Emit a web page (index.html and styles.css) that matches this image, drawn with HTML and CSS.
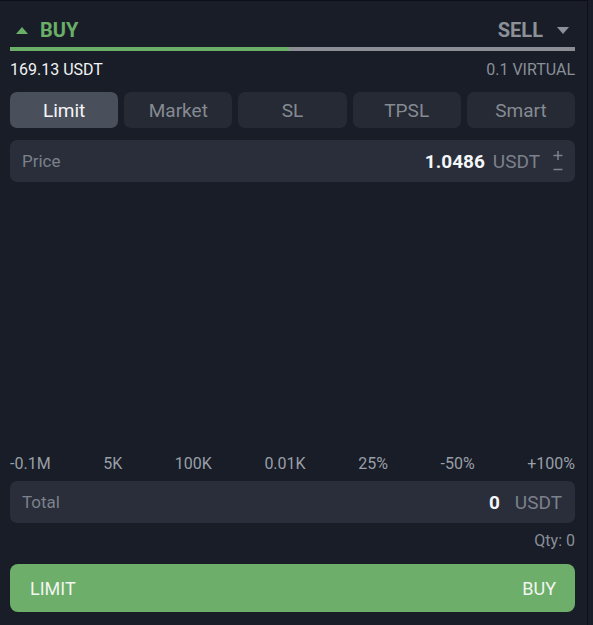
FILE: index.html
```html
<!DOCTYPE html>
<html>
<head>
<meta charset="utf-8">
<link rel="stylesheet" href="styles.css">
</head>
<body>
<div class="panel">
  <div class="side-head">
    <div class="side buy"><span class="tri up"></span>BUY</div>
    <div class="side sell">SELL<span class="tri down"></span></div>
  </div>
  <div class="ratio"><div class="ratio-buy"></div><div class="ratio-sell"></div></div>
  <div class="balances">
    <span class="bal-main">169.13 USDT</span>
    <span class="bal-alt">0.1 VIRTUAL</span>
  </div>
  <div class="tabs">
    <div class="tab active">Limit</div>
    <div class="tab">Market</div>
    <div class="tab">SL</div>
    <div class="tab">TPSL</div>
    <div class="tab">Smart</div>
  </div>
  <div class="field price-field">
    <span class="field-label">Price</span>
    <span class="field-right">
      <span class="field-value">1.0486</span>
      <span class="field-unit">USDT</span>
      <svg class="stepper" width="10" height="22" viewBox="0 0 10 22">
        <path d="M5 1V10M0.5 5.5H9.5M0.5 19.5H9.5" stroke="#7c818b" stroke-width="1.5" fill="none"/>
      </svg>
    </span>
  </div>
  <div class="spacer"></div>
  <div class="marks">
    <span>-0.1M</span><span>5K</span><span>100K</span><span>0.01K</span><span>25%</span><span>-50%</span><span>+100%</span>
  </div>
  <div class="field total-field">
    <span class="field-label">Total</span>
    <span class="field-right">
      <span class="field-value">0</span>
      <span class="field-unit big">USDT</span>
    </span>
  </div>
  <div class="qty">Qty: 0</div>
  <div class="submit"><span>LIMIT</span><span>BUY</span></div>
</div>
</body>
</html>
```
FILE: styles.css
```css
* { box-sizing: border-box; }
html, body { margin: 0; padding: 0; }
body {
  background: #181d27;
  font-family: Roboto, "Noto Sans", sans-serif;
  width: 593px;
  height: 625px;
  overflow: hidden;
}
.panel {
  width: 588px;
  height: 625px;
  border-top: 1px solid #0c0f15;
  border-right: 1px solid #0c0f15;
  padding: 0 12px 0 10px;
  display: flex;
  flex-direction: column;
}
.side-head {
  display: flex;
  justify-content: space-between;
  padding-top: 12px;
  height: 46px;
}
.side {
  font-size: 20px;
  font-weight: 700;
  line-height: 26px;
  display: flex;
  align-items: center;
}
.buy { color: #6aae68; padding-left: 6px; }
.sell { color: #8c9098; padding-right: 6px; }
.tri {
  width: 0; height: 0;
  border-left: 6px solid transparent;
  border-right: 6px solid transparent;
}
.tri.up { border-bottom: 7px solid #6aae68; margin-right: 12px; }
.tri.down { border-top: 7px solid #8c9098; margin-left: 14px; }
.ratio {
  display: flex;
  height: 4px;
}
.ratio-buy { width: 279px; background: #6aae68; }
.ratio-sell { flex: 1; background: #8c8e95; }
.balances {
  display: flex;
  justify-content: space-between;
  margin-top: 9px;
  line-height: 20px;
  font-size: 16px;
}
.bal-main { color: #f1f3f5; }
.bal-alt { color: #8a8f98; }
.tabs {
  display: flex;
  gap: 6px;
  margin-top: 12px;
}
.tab {
  flex: 1;
  height: 36px;
  border-radius: 7px;
  background: #252a34;
  color: #858a93;
  font-size: 19px;
  display: flex;
  align-items: center;
  justify-content: center;
}
.tab.active { background: #4a505b; color: #f3f5f7; }
.field {
  height: 42px;
  border-radius: 7px;
  background: #292e3a;
  display: flex;
  align-items: center;
  justify-content: space-between;
  padding: 0 12px;
}
.price-field { margin-top: 12px; }
.field-label { color: #7c818b; font-size: 17px; }
.field-right { display: flex; align-items: center; }
.field-value { color: #f4f6f8; font-weight: 700; font-size: 19px; }
.field-unit { color: #7c818b; font-size: 19px; margin-left: 8px; }
.field-unit.big { margin-left: 15px; }
.stepper { margin-left: 13px; display: block; }
.spacer { height: 272px; }
.marks {
  display: flex;
  justify-content: space-between;
  line-height: 20px;
  font-size: 16px;
  color: #9a9fa7;
}
.total-field { margin-top: 7px; padding-right: 13px; }
.qty {
  text-align: right;
  margin-top: 8px;
  line-height: 20px;
  font-size: 16px;
  color: #8a8f98;
}
.submit {
  margin-top: 13px;
  height: 48px;
  border-radius: 8px;
  background: #6daf6a;
  display: flex;
  align-items: center;
  justify-content: space-between;
  padding: 0 19px 0 20px;
  color: #f2f5f1;
  font-size: 18px;
}
```
